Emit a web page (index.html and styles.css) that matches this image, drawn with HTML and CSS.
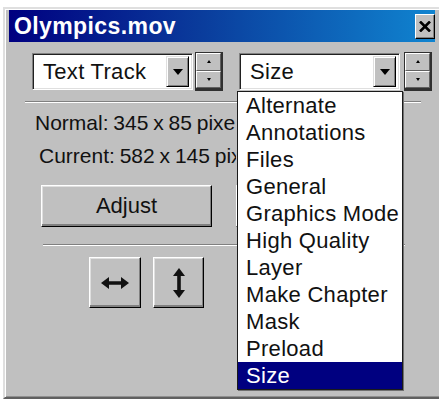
FILE: index.html
```
<!DOCTYPE html>
<html>
<head>
<meta charset="utf-8">
<title>Olympics.mov</title>
<link rel="stylesheet" href="styles.css">
</head>
<body>
<div class="window">
  <div class="titlebar">
    <span class="title">Olympics.mov</span>
    <button class="close" aria-label="Close">
      <svg width="12" height="11" viewBox="0 0 12 11"><path d="M1 0.5 L11 10.5 M11 0.5 L1 10.5" stroke="#000" stroke-width="2.6" fill="none"/></svg>
    </button>
  </div>

  <div class="panel">
    <div class="toolbar">
      <div class="combo track">
        <span class="field">Text Track</span>
        <span class="drop"><i class="tri"></i></span>
      </div>
      <div class="spinner">
        <span class="spin up"><i class="mini-up"></i></span>
        <span class="spin down"><i class="mini-down"></i></span>
      </div>

      <div class="combo-wrap">
        <div class="combo prop">
          <span class="field">Size</span>
          <span class="drop"><i class="tri"></i></span>
        </div>
        <ul class="list">
          <li>Alternate</li>
          <li>Annotations</li>
          <li>Files</li>
          <li>General</li>
          <li>Graphics Mode</li>
          <li>High Quality</li>
          <li>Layer</li>
          <li>Make Chapter</li>
          <li>Mask</li>
          <li>Preload</li>
          <li class="selected">Size</li>
        </ul>
      </div>
      <div class="spinner spinner-right">
        <span class="spin up"><i class="mini-up"></i></span>
        <span class="spin down"><i class="mini-down"></i></span>
      </div>
    </div>

    <div class="rule rule-top"></div>

    <p class="info info-normal">Normal: 345 x 85 pixels</p>
    <p class="info info-current">Current: 582 x 145 pixels</p>

    <div class="actions">
      <button class="btn btn-adjust">Adjust</button>
      <button class="btn btn-restore" aria-label="Restore"></button>
    </div>

    <div class="rule rule-bottom"></div>

    <div class="arrows">
      <button class="btn btn-icon" aria-label="Fit width">
        <svg width="28" height="12" viewBox="0 0 28 12"><polygon points="0,6 8,0 8,4.2 20,4.2 20,0 28,6 20,12 20,7.8 8,7.8 8,12" fill="#111"/></svg>
      </button>
      <button class="btn btn-icon btn-icon-v" aria-label="Fit height">
        <svg width="12" height="30" viewBox="0 0 12 30"><polygon points="6,0 12,8 7.8,8 7.8,22 12,22 6,30 0,22 4.2,22 4.2,8 0,8" fill="#111"/></svg>
      </button>
    </div>
  </div>
</div>
</body>
</html>
```

FILE: styles.css
```
html, body {
  margin: 0;
  padding: 0;
  background: #fff;
  overflow: hidden;
}

body {
  font-family: "Liberation Sans", Arial, sans-serif;
  font-size: 22px;
  color: #111;
}

/* dialog frame */
.window {
  margin: 7px 0 0 3px;
  width: 437px;
  height: 392px;
  box-sizing: border-box;
  background: #c0c0c0;
  border: 2px solid;
  border-color: #dfdfdf #404040 #606060 #dfdfdf;
  border-right: 0;
  box-shadow: inset 1px 1px #fff, inset 0 -1px #909090;
  padding: 1px 0 0 4px;
  display: flex;
  flex-direction: column;
}

.titlebar {
  width: 426px;
  height: 32px;
  flex: none;
  display: flex;
  align-items: center;
  justify-content: space-between;
  padding-left: 5px;
  box-sizing: border-box;
  background: linear-gradient(90deg, #000080 0%, #0a3c9c 45%, #1084d0 100%);
}

.title {
  color: #fff;
  font-weight: bold;
  font-size: 23px;
  letter-spacing: 0.4px;
}

.close {
  width: 20px;
  height: 25px;
  margin: 0;
  padding: 0;
  display: flex;
  align-items: center;
  justify-content: center;
  background: #c0c0c0;
  border: 1px solid;
  border-color: #fff #000 #000 #fff;
  box-shadow: inset -1px -1px #808080;
}

.panel {
  display: flex;
  flex-direction: column;
  align-items: flex-start;
}

/* top row: track picker + property picker */
.toolbar {
  display: flex;
  align-items: center;
  height: 39px;
  margin-top: 10px;
  padding-left: 23px;
}

.combo {
  width: 161px;
  height: 37px;
  box-sizing: border-box;
  display: flex;
  border: 1px solid;
  border-color: #808080 #fff #fff #808080;
  box-shadow: inset 1px 1px #202020, inset -1px -1px #dfdfdf;
  padding: 2px 3px 2px 2px;
  background: #fff;
}

.field {
  flex: 1;
  padding-left: 8px;
  line-height: 31px;
  white-space: nowrap;
  letter-spacing: 0.3px;
}

.drop {
  width: 23px;
  flex: none;
  display: flex;
  align-items: center;
  justify-content: center;
  background: #c0c0c0;
  box-sizing: border-box;
  border: 1px solid;
  border-color: #dfdfdf #000 #000 #dfdfdf;
  box-shadow: inset 1px 1px #fff, inset -1px -1px #808080;
}

.tri {
  width: 0;
  height: 0;
  border-left: 5px solid transparent;
  border-right: 5px solid transparent;
  border-top: 6px solid #000;
}

.spinner {
  width: 28px;
  height: 39px;
  margin-left: 2px;
  box-sizing: border-box;
  display: flex;
  flex-direction: column;
  border: 1px solid #303030;
  border-right-width: 2px;
  border-bottom-width: 3px;
  background: #c0c0c0;
}

.spinner-right {
  margin-left: 4px;
}

.spin {
  flex: 1;
  display: flex;
  align-items: center;
  justify-content: center;
  border: 1px solid;
  border-color: #fff #606060 #606060 #fff;
}

.mini-up {
  width: 0;
  height: 0;
  border-left: 2px solid transparent;
  border-right: 2px solid transparent;
  border-bottom: 3px solid #000;
}

.mini-down {
  width: 0;
  height: 0;
  border-left: 2px solid transparent;
  border-right: 2px solid transparent;
  border-top: 3px solid #000;
}

.combo-wrap {
  position: relative;
  margin-left: 16px;
}

/* open drop-down list of the property picker */
.list {
  position: absolute;
  top: calc(100% + 1px);
  left: -2px;
  width: 164px;
  margin: 0;
  padding: 0;
  list-style: none;
  background: #fff;
  border: 1px solid #1a1a1a;
  box-shadow: 1px 1px 0 #707070;
  z-index: 2;
  overflow: hidden;
}

.list li {
  height: 27px;
  line-height: 27px;
  padding-left: 8px;
  white-space: nowrap;
  letter-spacing: 0.3px;
}

.list li.selected {
  background: #000080;
  color: #fff;
}

/* etched separators */
.rule {
  height: 0;
  border-top: 1px solid #808080;
  border-bottom: 1px solid #fff;
}

.rule-top {
  margin: 10px 0 0 16px;
  width: 396px;
}

.rule-bottom {
  margin: 17px 0 0 34px;
  width: 362px;
}

/* size readouts run under the open list, so they stop at its edge */
.info {
  margin: 7px 0 0;
  font-size: 21px;
  line-height: 26px;
  white-space: nowrap;
  word-spacing: -1px;
  letter-spacing: 0;
  overflow: hidden;
  box-sizing: border-box;
  width: 227px;
}

.info-normal {
  padding-left: 26px;
}

.info-current {
  padding-left: 30px;
}

.actions {
  display: flex;
  gap: 24px;
  margin: 16px 0 0 32px;
}

.btn {
  margin: 0;
  padding: 0;
  font: inherit;
  color: #111;
  background: #c0c0c0;
  box-sizing: border-box;
  border: 1px solid;
  border-color: #fff #000 #000 #fff;
  box-shadow: inset -1px -2px #808080, inset 1px 1px #dfdfdf;
  display: flex;
  align-items: center;
  justify-content: center;
}

.btn-adjust {
  width: 171px;
  height: 42px;
}

.btn-restore {
  width: 168px;
  height: 42px;
}

.arrows {
  display: flex;
  gap: 12px;
  margin: 11px 0 0 80px;
}

.btn-icon {
  width: 52px;
  height: 51px;
}

.btn-icon-v {
  width: 51px;
}
```
